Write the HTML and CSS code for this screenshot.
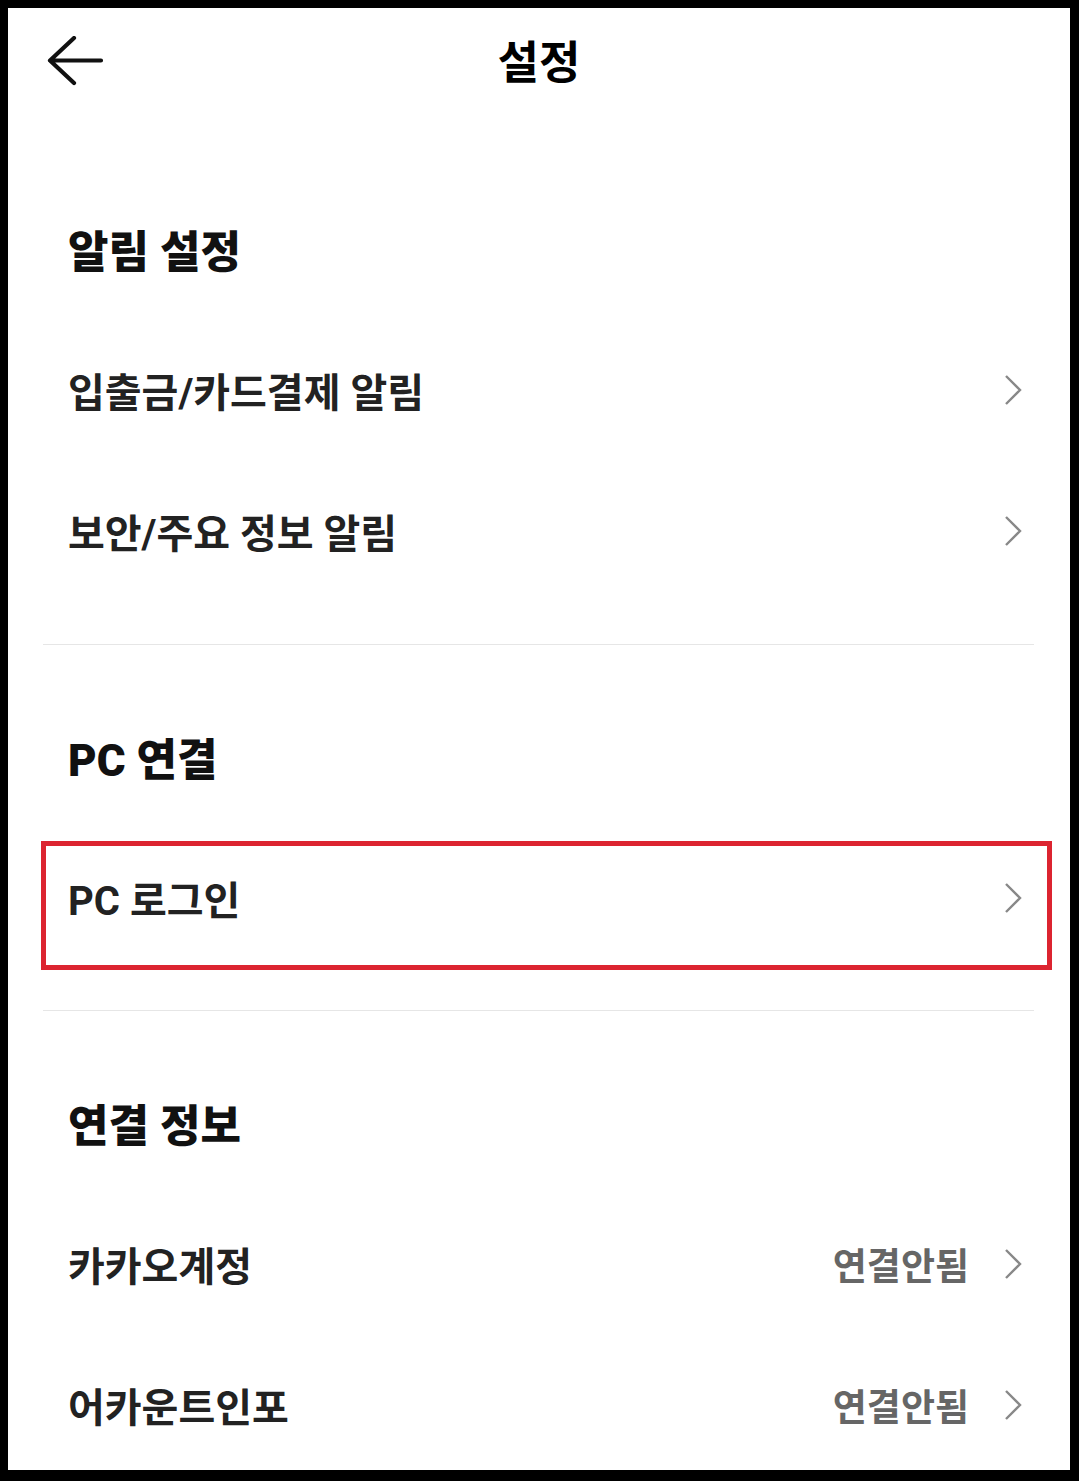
FILE: index.html
```html
<!DOCTYPE html>
<html lang="ko">
<head>
<meta charset="utf-8">
<link rel="stylesheet" href="styles.css">
</head>
<body>
<div class="screen">
  <header class="topbar">
    <svg class="back" width="58" height="52" viewBox="0 0 58 52"><path d="M55 24.5H4M28 2L4 24.5L28 47" fill="none" stroke="#111" stroke-width="4.2" stroke-linecap="round" stroke-linejoin="round"/></svg>
    <h1 class="title">설정</h1>
  </header>
  <main class="list">
    <section class="section first">
      <h2 class="sec-head">알림 설정</h2>
      <div class="row"><span class="label">입출금/카드결제 알림</span><svg class="chev" width="20" height="32" viewBox="0 0 20 32"><path d="M3 2L17 16L3 30" fill="none" stroke="#888" stroke-width="2.4"/></svg></div>
      <div class="row"><span class="label">보안/주요 정보 알림</span><svg class="chev" width="20" height="32" viewBox="0 0 20 32"><path d="M3 2L17 16L3 30" fill="none" stroke="#888" stroke-width="2.4"/></svg></div>
    </section>
    <hr class="divider">
    <section class="section">
      <h2 class="sec-head">PC 연결</h2>
      <div class="row highlighted"><span class="label">PC 로그인</span><svg class="chev" width="20" height="32" viewBox="0 0 20 32"><path d="M3 2L17 16L3 30" fill="none" stroke="#888" stroke-width="2.4"/></svg><span class="mark"></span></div>
    </section>
    <hr class="divider">
    <section class="section">
      <h2 class="sec-head">연결 정보</h2>
      <div class="row"><span class="label">카카오계정</span><span class="status">연결안됨</span><svg class="chev" width="20" height="32" viewBox="0 0 20 32"><path d="M3 2L17 16L3 30" fill="none" stroke="#888" stroke-width="2.4"/></svg></div>
      <div class="row"><span class="label">어카운트인포</span><span class="status">연결안됨</span><svg class="chev" width="20" height="32" viewBox="0 0 20 32"><path d="M3 2L17 16L3 30" fill="none" stroke="#888" stroke-width="2.4"/></svg></div>
    </section>
  </main>
</div>
</body>
</html>
```
FILE: styles.css
```css
html, body {
  margin: 0;
  padding: 0;
  background: #000;
}
body {
  padding: 8px 9px 11px 8px;
  height: 1481px;
  box-sizing: border-box;
  overflow: hidden;
  font-family: Roboto, "Noto Sans CJK KR", "Noto Sans", sans-serif;
}
.screen {
  background: #fff;
  height: 1462px;
  overflow: hidden;
}
.topbar {
  height: 106px;
  display: flex;
  align-items: center;
  justify-content: center;
  position: relative;
}
.back {
  position: absolute;
  left: 38px;
  top: 28px;
}
.title {
  margin: 0;
  font-size: 45px;
  font-weight: 700;
  color: #000;
  line-height: 1;
  position: relative;
  top: 2px;
}
.list {
  padding-top: 64px;
}
.section {
  padding: 41px 0 42px;
}
.section.first {
  padding-top: 0;
  padding-bottom: 43px;
}
.sec-head {
  margin: 0;
  height: 141px;
  display: flex;
  align-items: center;
  padding-left: 60px;
  font-size: 44px;
  font-weight: 900;
  color: #111;
}
.row {
  height: 141px;
  display: flex;
  align-items: center;
  padding: 0 47px 0 60px;
  position: relative;
}
.label {
  flex: 1;
  font-size: 40px;
  font-weight: 700;
  color: #222;
}
.status {
  font-size: 37px;
  font-weight: 700;
  color: #666;
  margin-right: 34px;
}
.chev {
  display: block;
}
.mark {
  position: absolute;
  left: 33px;
  right: 18px;
  top: 14px;
  bottom: -2px;
  border: 5px solid #dc2430;
}
.divider {
  margin: 0 36px 0 35px;
  border: 0;
  height: 1px;
  background: #e6e6e6;
}
```
